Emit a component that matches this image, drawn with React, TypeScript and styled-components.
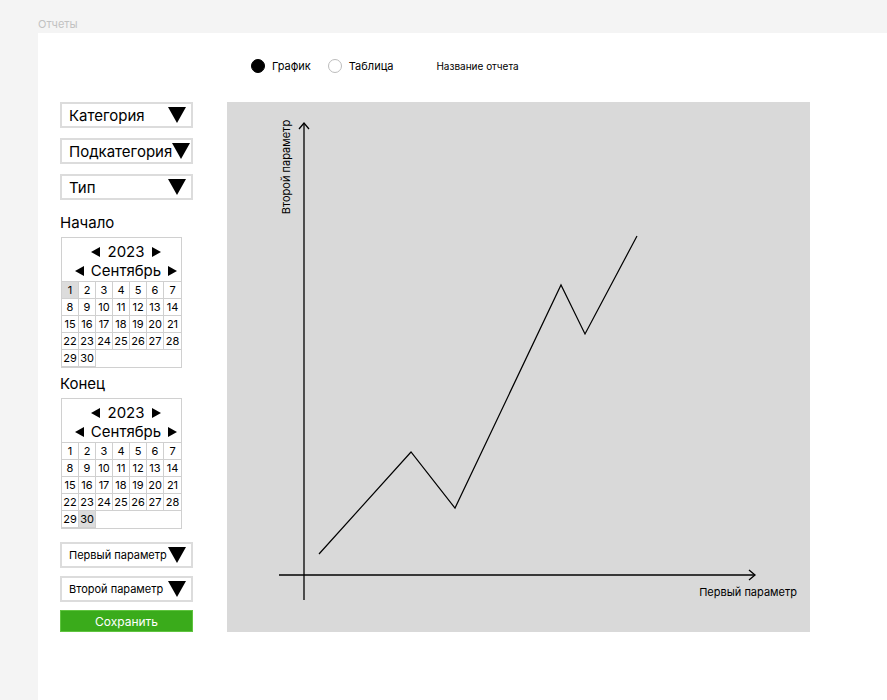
import React from "react";
import styled, { createGlobalStyle } from "styled-components";

const GlobalStyle = createGlobalStyle`
  body {
    margin: 0;
    background: #f4f4f4;
    font-family: Inter, "Noto Sans", sans-serif;
    color: #000;
  }
`;

const PageTitle = styled.div`
  height: 33px;
  padding-left: 38px;
  box-sizing: border-box;
  padding-top: 18px;
  font-size: 11px;
  line-height: 13px;
  color: #c2c2c2;
`;

const Panel = styled.main`
  margin-left: 38px;
  min-height: 667px;
  background: #fff;
  padding-top: 26px;
  box-sizing: border-box;
`;

const ModeRow = styled.div`
  display: flex;
  align-items: center;
  height: 14px;
  margin-left: 213px;
  font-size: 11px;
`;

const Radio = styled.span<{ $checked: boolean }>`
  width: 14px;
  height: 14px;
  border-radius: 50%;
  box-sizing: border-box;
  background: ${(p) => (p.$checked ? "#000" : "#fff")};
  border: 1px solid ${(p) => (p.$checked ? "#000" : "#bcbcbc")};
  margin-right: 7px;
`;

const RadioLabel = styled.span<{ $gap: number }>`
  margin-right: ${(p) => p.$gap}px;
`;

const ReportName = styled.span`
  font-size: 10px;
`;

const Content = styled.div`
  display: flex;
  align-items: flex-start;
  gap: 34px;
  margin-top: 29px;
  padding-left: 22px;
`;

const Sidebar = styled.div`
  display: flex;
  flex-direction: column;
  width: 133px;
`;

const Select = styled.div<{ $small?: boolean; $top: number }>`
  display: flex;
  align-items: center;
  justify-content: space-between;
  height: 26px;
  box-sizing: border-box;
  border: 2px solid #dcdcdc;
  padding: 0 5px 0 7px;
  margin-top: ${(p) => p.$top}px;
  font-size: ${(p) => (p.$small ? 11 : 15)}px;
  white-space: nowrap;
`;

const Arrow = styled.span`
  flex-shrink: 0;
  width: 0;
  height: 0;
  border-left: 9px solid transparent;
  border-right: 9px solid transparent;
  border-top: 16px solid #000;
`;

const FieldLabel = styled.div<{ $top: number }>`
  font-size: 15px;
  line-height: 20px;
  margin-top: ${(p) => p.$top}px;
  margin-bottom: 4px;
`;

const Calendar = styled.div`
  width: 121px;
  margin-left: 1px;
  border: 1px solid #d0d0d0;
  box-sizing: border-box;
`;

const CalHeader = styled.div`
  display: flex;
  flex-direction: column;
  align-items: center;
  padding: 4px 0 0 9px;
  height: 43px;
  box-sizing: border-box;
  font-size: 15px;
`;

const CalLine = styled.div`
  display: flex;
  align-items: center;
  gap: 7px;
  height: 19px;
`;

const Tri = styled.span<{ $dir: "left" | "right" }>`
  width: 0;
  height: 0;
  border-top: 5px solid transparent;
  border-bottom: 5px solid transparent;
  ${(p) =>
    p.$dir === "left"
      ? "border-right: 9px solid #000;"
      : "border-left: 9px solid #000;"}
`;

const Days = styled.div`
  display: grid;
  grid-template-columns: repeat(7, 17px);
  grid-auto-rows: 17px;
  border-top: 1px solid #d0d0d0;
`;

const Day = styled.div<{ $selected: boolean }>`
  box-sizing: border-box;
  border-right: 1px solid #d0d0d0;
  border-bottom: 1px solid #d0d0d0;
  background: ${(p) => (p.$selected ? "#dcdcdc" : "#fff")};
  font-size: 11px;
  line-height: 16px;
  text-align: center;
  &:nth-child(7n) {
    border-right: none;
  }
`;

const Filler = styled.div`
  grid-column: span 5;
`;

const SaveButton = styled.button`
  margin-top: 8px;
  height: 22px;
  border: 1px solid #5fc43f;
  background: #3aab1b;
  color: #fff;
  font-family: inherit;
  font-size: 12px;
  padding: 0;
  cursor: pointer;
`;

const ChartBox = styled.div`
  width: 583px;
  height: 530px;
  background: #d9d9d9;
  flex-shrink: 0;
`;

function MonthCalendar({ selected }: { selected: number }) {
  const days = Array.from({ length: 30 }, (_, i) => i + 1);
  return (
    <Calendar>
      <CalHeader>
        <CalLine>
          <Tri $dir="left" />
          2023
          <Tri $dir="right" />
        </CalLine>
        <CalLine>
          <Tri $dir="left" />
          Сентябрь
          <Tri $dir="right" />
        </CalLine>
      </CalHeader>
      <Days>
        {days.map((d) => (
          <Day key={d} $selected={d === selected}>
            {d}
          </Day>
        ))}
        <Filler />
      </Days>
    </Calendar>
  );
}

function Chart() {
  const points = "92,452 184,350 228,406 334,183 358,232 410,134";
  return (
    <ChartBox>
      <svg width="583" height="530" viewBox="0 0 583 530">
        <g stroke="#000" strokeWidth="1.3" fill="none">
          <line x1="77" y1="21" x2="77" y2="498" />
          <polyline points="72,27 77,21 82,27" />
          <line x1="52" y1="473" x2="528" y2="473" />
          <polyline points="522,468 528,473 522,478" />
          <polyline points={points} strokeWidth="1.2" />
        </g>
        <text
          x="0"
          y="0"
          fontSize="11"
          fontFamily="Inter, sans-serif"
          textAnchor="middle"
          transform="translate(63 65) rotate(-90)"
        >
          Второй параметр
        </text>
        <text
          x="570"
          y="494"
          fontSize="11"
          fontFamily="Inter, sans-serif"
          textAnchor="end"
        >
          Первый параметр
        </text>
      </svg>
    </ChartBox>
  );
}

export default function App() {
  return (
    <>
      <GlobalStyle />
      <PageTitle>Отчеты</PageTitle>
      <Panel>
        <ModeRow>
          <Radio $checked={true} />
          <RadioLabel $gap={17}>График</RadioLabel>
          <Radio $checked={false} />
          <RadioLabel $gap={43}>Таблица</RadioLabel>
          <ReportName>Название отчета</ReportName>
        </ModeRow>
        <Content>
          <Sidebar>
            <Select $top={0}>
              Категория <Arrow />
            </Select>
            <Select $top={10}>
              Подкатегория <Arrow />
            </Select>
            <Select $top={10}>
              Тип <Arrow />
            </Select>
            <FieldLabel $top={13}>Начало</FieldLabel>
            <MonthCalendar selected={1} />
            <FieldLabel $top={6}>Конец</FieldLabel>
            <MonthCalendar selected={30} />
            <Select $small $top={13}>
              Первый параметр <Arrow />
            </Select>
            <Select $small $top={8}>
              Второй параметр <Arrow />
            </Select>
            <SaveButton>Сохранить</SaveButton>
          </Sidebar>
          <Chart />
        </Content>
      </Panel>
    </>
  );
}
